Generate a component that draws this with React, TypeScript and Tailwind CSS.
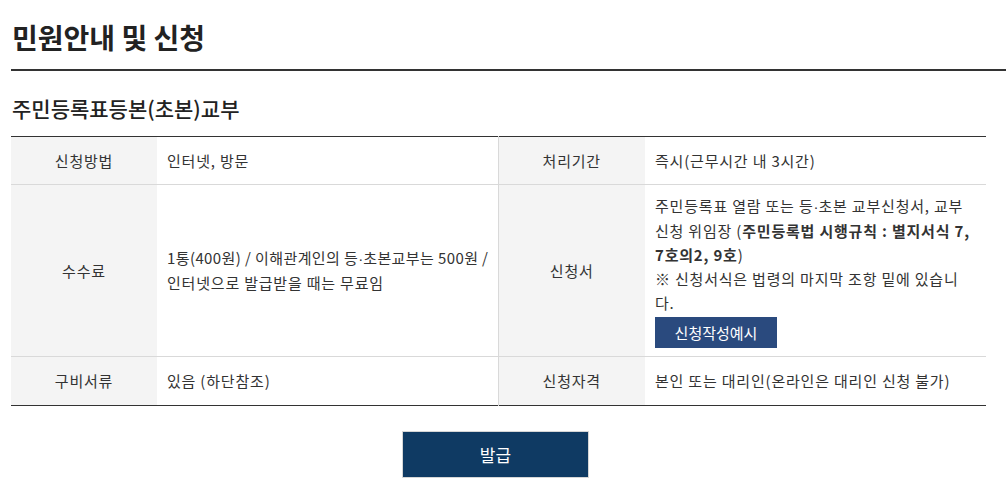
import React from "react";

const th = "bg-[#f4f4f4] text-center align-middle font-normal text-[#333] px-[10px]";
const td = "bg-white text-left align-middle text-[#333] px-[10px]";

function Dot() {
  return <span className="font-['Liberation_Sans'] tracking-normal">·</span>;
}

export default function App() {
  return (
    <div
      className="w-[1006px] h-[492px] overflow-hidden bg-white text-[15px] leading-[24px] text-[#333] tracking-[0.8px]"
      style={{ fontFamily: '"Noto Sans CJK KR", "Noto Sans", sans-serif' }}
    >
      <div className="pl-[11px] pt-[18px]">
        <h1 className="text-[28px] leading-[38px] font-bold text-[#222] pl-px tracking-normal">민원안내 및 신청</h1>
        <div className="mt-[13px] h-[2px] w-[995px] bg-[#333]" />
        <h2 className="mt-[22px] text-[21px] leading-[30px] font-medium text-[#222] pl-px tracking-normal">
          주민등록표등본(초본)교부
        </h2>
        <table className="mt-[13px] w-[975px] table-fixed border-collapse border-t border-b border-[#333]">
          <colgroup>
            <col className="w-[146px]" />
            <col className="w-[341px]" />
            <col className="w-[147px]" />
            <col className="w-[341px]" />
          </colgroup>
          <tbody>
            <tr className="border-b border-[#d9d9d9]">
              <th className={th + " pt-[12px] pb-[11px]"}>신청방법</th>
              <td className={td + " pt-[12px] pb-[11px] border-r border-[#d9d9d9]"}>인터넷, 방문</td>
              <th className={th + " pt-[12px] pb-[11px]"}>처리기간</th>
              <td className={td + " pt-[12px] pb-[11px]"}>즉시(근무시간 내 3시간)</td>
            </tr>
            <tr className="border-b border-[#d9d9d9]">
              <th className={th}>수수료</th>
              <td className={td + " border-r border-[#d9d9d9] whitespace-nowrap"}>
                <span className="tracking-[0.4px]">
                  1통(400원) / 이해관계인의 등<Dot />초본교부는 500원 /
                </span>
                <br />
                인터넷으로 발급받을 때는 무료임
              </td>
              <th className={th}>신청서</th>
              <td className={td + " pt-[9px] pb-[9px] whitespace-nowrap"}>
                주민등록표 열람 또는 등<Dot />초본 교부신청서, 교부<br />
                신청 위임장 (<b className="font-bold">주민등록법 시행규칙 : 별지서식 7,</b>
                <br />
                <b className="font-bold">7호의2, 9호</b>)<br />
                ※ 신청서식은 법령의 마지막 조항 밑에 있습니<br />
                다.
                <div className="mt-[2px] mb-[-1px] flex h-[31px] w-[122px] items-center justify-center bg-[#2a4a7e] text-[15px] tracking-normal text-white">
                  신청작성예시
                </div>
              </td>
            </tr>
            <tr>
              <th className={th + " py-[12px]"}>구비서류</th>
              <td className={td + " py-[12px] border-r border-[#d9d9d9]"}>있음 (하단참조)</td>
              <th className={th + " py-[12px]"}>신청자격</th>
              <td className={td + " py-[12px]"}>본인 또는 대리인(온라인은 대리인 신청 불가)</td>
            </tr>
          </tbody>
        </table>
        <div className="mt-[25px] ml-[391px] flex h-[47px] w-[187px] items-center justify-center border border-[#d6d6d6] bg-[#0f3a63] text-[17px] tracking-normal text-white">
          발급
        </div>
      </div>
    </div>
  );
}
